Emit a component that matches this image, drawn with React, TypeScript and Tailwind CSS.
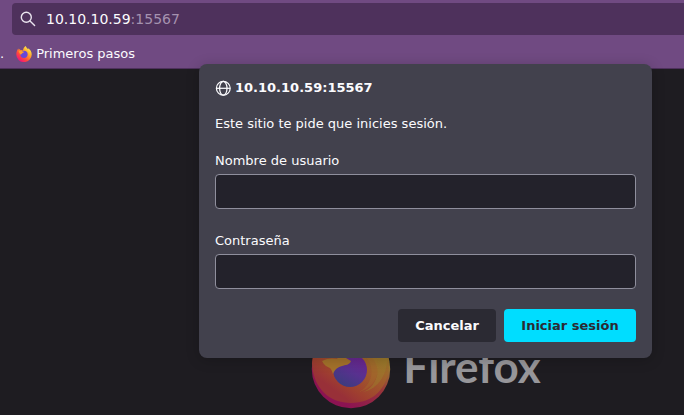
import { useState } from "react";

function SearchIcon() {
  return (
    <svg viewBox="0 0 16 16" className="size-4 shrink-0" fill="none" stroke="#e9e3ee" strokeWidth="1.4" strokeLinecap="round" aria-hidden="true">
      <circle cx="6.3" cy="6.3" r="5" />
      <path d="M10 10l4.6 4.6" />
    </svg>
  );
}

function GlobeIcon() {
  return (
    <svg viewBox="0 0 16 16" className="size-4 shrink-0" fill="none" stroke="#fbfbfe" strokeWidth="1.25" aria-hidden="true">
      <circle cx="8.3" cy="8.3" r="6.9" />
      <ellipse cx="8.3" cy="8.3" rx="3.7" ry="6.9" />
      <path d="M1.5 8.3h13.6" />
    </svg>
  );
}

function FirefoxIcon() {
  return (
    <svg viewBox="0 0 16 16" className="size-4 shrink-0" aria-hidden="true">
      <defs>
        <linearGradient id="flame" x1="0.85" y1="0.1" x2="0.2" y2="0.9">
          <stop offset="0" stopColor="#fff44f" />
          <stop offset="0.35" stopColor="#ffa52a" />
          <stop offset="0.7" stopColor="#ff4a3c" />
          <stop offset="1" stopColor="#f0157a" />
        </linearGradient>
      </defs>
      <path d="M9.8 0c.3 1.5 1.4 2.3 2.3 3.2l.2-1c1.9 1.3 3.4 3.5 3.4 6.1A7.7 7.7 0 0 1 .3 8.500C.2 6 1.200 3.800 2.400 2.500l.3 1.400 1-.9.8 1.200c.9-.2 1.700 0 2.500.4C7.200 2.400 8.300.9 9.800 0z" fill="url(#flame)" />
      <circle cx="8" cy="8.3" r="3.6" fill="#6847d8" />
      <path d="M2.7 5.3c1.5-.7 2.8-.6 4.3.3.4.3 1 .2 1.3.2-.4 1-1.7 1.1-2.3 1.7-.6.5-.8 1.100-1.300 1.300-.8-.8-1.500-2-2-3.500z" fill="#ff9e2c" />
    </svg>
  );
}

function FirefoxLogo() {
  return (
    <svg viewBox="0 0 80 80" className="size-20 shrink-0" aria-hidden="true">
      <defs>
        <linearGradient id="ring" x1="0.95" y1="0.3" x2="0.45" y2="0.95">
          <stop offset="0" stopColor="#9a7a2b" />
          <stop offset="0.45" stopColor="#a05a2c" />
          <stop offset="0.8" stopColor="#9f402f" />
          <stop offset="1" stopColor="#983038" />
        </linearGradient>
        <linearGradient id="rim" x1="0.95" y1="0.4" x2="0.5" y2="1">
          <stop offset="0" stopColor="#9a802f" />
          <stop offset="0.45" stopColor="#98343a" />
          <stop offset="1" stopColor="#8c1352" />
        </linearGradient>
        <linearGradient id="globe" x1="0.8" y1="0.1" x2="0.3" y2="1">
          <stop offset="0" stopColor="#6c2590" />
          <stop offset="0.5" stopColor="#58318f" />
          <stop offset="1" stopColor="#3b3c7d" />
        </linearGradient>
      </defs>
      <circle cx="40" cy="40" r="39.2" fill="url(#rim)" />
      <path d="M1 34C2 14 19 1 40 1s38 15 38 33c0 26-17 40-38 40S2 60 1 34z" fill="url(#ring)" />
      <path d="M52 22c13 6 18 19 12 30-3 6-7 9-12 11 12-2 23-14 24-30 0-5-1-9-3-13z" fill="#9c812c" opacity="0.45" />
      <path d="M50 24c11 7 13 19 8 29-3 5-6 8-10 10 11-3 19-12 19-24 0-6-1-11-4-15z" fill="#a4742b" opacity="0.35" />
      <circle cx="39" cy="41" r="17" fill="url(#globe)" />
      <path d="M11 32c5-3 11-3 15-2l3-6h8l-2 5 5 3c-1 4-6 4-9 5-4 1-7 3-9 8-1-2-1-4-3-6-3-1-6-3-8-7z" fill="#a4722b" />
    </svg>
  );
}

function Field({ id, label, type, value, onChange }: {
  id: string;
  label: string;
  type: string;
  value: string;
  onChange: (value: string) => void;
}) {
  return (
    <div className="flex flex-col gap-[3px]">
      <label htmlFor={id} className="leading-5">{label}</label>
      <input
        id={id}
        type={type}
        value={value}
        onChange={(event) => onChange(event.target.value)}
        className="h-[35px] w-full rounded border border-[#8f8f9d] bg-[#23222b] px-2 outline-none focus:border-[#00ddff]"
      />
    </div>
  );
}

export default function App() {
  const [user, setUser] = useState("");
  const [password, setPassword] = useState("");

  return (
    <div className="relative flex min-h-screen flex-col overflow-hidden bg-[#1e1c21] font-['DejaVu_Sans',sans-serif] text-[13px] text-[#fbfbfe]">
      <header className="border-b border-[#4e315c] bg-[#704a82] pt-[3px]">
        <div className="ml-3 flex h-8 items-center gap-2.5 rounded-l bg-[#4e315c] pl-2 text-sm">
          <SearchIcon />
          <div>
            10.10.10.59<span className="text-[#a592af]">:15567</span>
          </div>
        </div>
        <nav className="flex h-[33px] items-center gap-3 pt-1">
          <span>.</span>
          <a href="#" className="flex items-center gap-1">
            <FirefoxIcon />
            Primeros pasos
          </a>
        </nav>
      </header>

      <main className="ml-[168px] flex justify-center gap-3 pt-[260px]">
        <FirefoxLogo />
        <span className="pt-2 font-['Lato',sans-serif] text-[44px] font-bold leading-[58px] text-[#97969a]">Firefox</span>
      </main>

      <form
        role="dialog"
        aria-labelledby="host"
        onSubmit={(event) => event.preventDefault()}
        className="absolute left-[199px] right-8 top-16 flex flex-col rounded-lg bg-[#42414d] p-4 shadow-[0_2px_14px_rgba(0,0,0,0.2)]"
      >
        <h1 id="host" className="flex items-center gap-1 font-bold leading-4">
          <GlobeIcon />
          10.10.10.59:15567
        </h1>
        <p className="mt-[18px] leading-5">Este sitio te pide que inicies sesión.</p>
        <div className="mt-[17px] flex flex-col gap-[22px]">
          <Field id="user" label="Nombre de usuario" type="text" value={user} onChange={setUser} />
          <Field id="password" label="Contraseña" type="password" value={password} onChange={setPassword} />
        </div>
        <div className="mt-5 flex justify-end gap-2 font-bold">
          <button type="button" className="h-[33px] min-w-[98px] rounded bg-[#2b2a33] px-4">Cancelar</button>
          <button type="submit" className="h-[33px] min-w-[132px] rounded bg-[#00ddff] px-4 text-[#2b2a33]">Iniciar sesión</button>
        </div>
      </form>
    </div>
  );
}
